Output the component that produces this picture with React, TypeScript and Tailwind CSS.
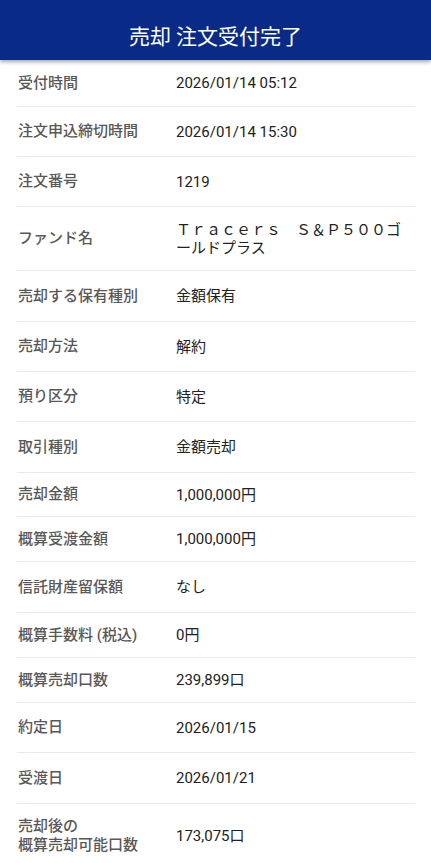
import React from "react";

// 売却 注文受付完了 画面
interface Row {
  label: React.ReactNode;
  value: React.ReactNode;
  h: string; // 行の高さ (区切り線込み)
}

const rows: Row[] = [
  { label: "受付時間", value: "2026/01/14 05:12", h: "h-[47px]" },
  { label: "注文申込締切時間", value: "2026/01/14 15:30", h: "h-[50px]" },
  { label: "注文番号", value: "1219", h: "h-[50px]" },
  {
    label: "ファンド名",
    value: "Ｔｒａｃｅｒｓ　Ｓ＆Ｐ５００ゴールドプラス",
    h: "h-[64px]",
  },
  { label: "売却する保有種別", value: "金額保有", h: "h-[51px]" },
  { label: "売却方法", value: "解約", h: "h-[50px]" },
  { label: "預り区分", value: "特定", h: "h-[50px]" },
  { label: "取引種別", value: "金額売却", h: "h-[51px]" },
  { label: "売却金額", value: "1,000,000円", h: "h-[44px]" },
  { label: "概算受渡金額", value: "1,000,000円", h: "h-[45px]" },
  { label: "信託財産留保額", value: "なし", h: "h-[51px]" },
  { label: "概算手数料 (税込)", value: "0円", h: "h-[45px]" },
  { label: "概算売却口数", value: "239,899口", h: "h-[45px]" },
  { label: "約定日", value: "2026/01/15", h: "h-[50px]" },
  { label: "受渡日", value: "2026/01/21", h: "h-[51px]" },
  {
    label: (
      <>
        売却後の
        <br />
        概算売却可能口数
      </>
    ),
    value: "173,075口",
    h: "h-[64px]",
  },
];

const App: React.FC = () => {
  return (
    <div
      className="min-h-screen bg-white"
      style={{ fontFamily: 'Roboto, "Noto Sans CJK JP", sans-serif' }}
    >
      <header className="relative z-10 flex h-[60px] items-center justify-center bg-[#0a2a88] pt-[14px] shadow-[0_2px_4px_rgba(0,0,0,0.35)]">
        <h1 className="text-[21px] leading-none text-white">売却 注文受付完了</h1>
      </header>
      <div>
        {rows.map((row, i) => (
          <div
            key={i}
            className={`ml-[17px] mr-[16px] flex items-center ${row.h} ${
              i < rows.length - 1 ? "border-b border-[#e3eaf2]" : ""
            }`}
          >
            <div className="w-[159px] shrink-0 pl-px text-[15px] font-medium leading-[19px] text-[#585858]">
              {row.label}
            </div>
            <div className="min-w-0 flex-1 text-[15px] leading-[18px] text-[#222222]">
              {row.value}
            </div>
          </div>
        ))}
      </div>
    </div>
  );
};

export default App;
